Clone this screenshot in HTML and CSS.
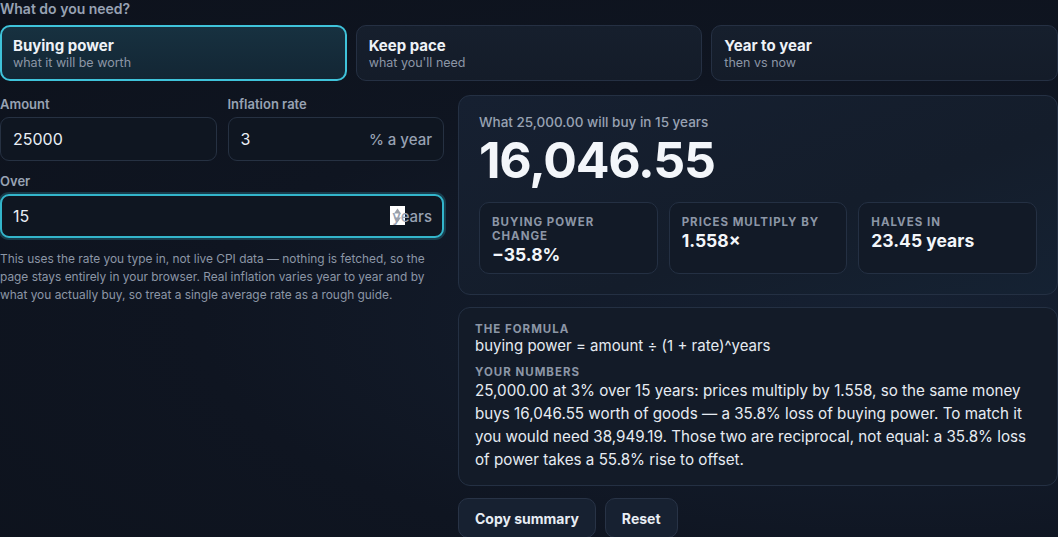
FILE: index.html
```html
<!DOCTYPE html>
<html lang="en">
<head>
<meta charset="utf-8">
<title>Inflation calculator</title>
<link rel="stylesheet" href="styles.css">
</head>
<body>
<main class="app">
  <div class="section-label">What do you need?</div>
  <div class="modes">
    <button class="mode active"><span class="mode-title">Buying power</span><span class="mode-sub">what it will be worth</span></button>
    <button class="mode"><span class="mode-title">Keep pace</span><span class="mode-sub">what you'll need</span></button>
    <button class="mode"><span class="mode-title">Year to year</span><span class="mode-sub">then vs now</span></button>
  </div>

  <div class="main">
    <div class="inputs">
      <div class="row2">
        <div class="field">
          <label class="label">Amount</label>
          <div class="box"><span class="val">25000</span></div>
        </div>
        <div class="field">
          <label class="label">Inflation rate</label>
          <div class="box"><span class="val">3</span><span class="suffix">% a year</span></div>
        </div>
      </div>
      <div class="field">
        <label class="label">Over</label>
        <div class="box focus"><span class="val">15</span><span class="suffix">years</span>
          <span class="spin"><svg width="15" height="19" viewBox="0 0 15 19"><path d="M7.5 2.5 L11 7.5 H4 Z" fill="#9a9fa8"/><path d="M7.5 16.5 L11 11.5 H4 Z" fill="#9a9fa8"/></svg></span>
        </div>
      </div>
      <p class="note">This uses the rate you type in, not live CPI data — nothing is fetched, so the page stays entirely in your browser. Real inflation varies year to year and by what you actually buy, so treat a single average rate as a rough guide.</p>
    </div>

    <div class="results">
      <section class="panel result">
        <div class="result-cap">What 25,000.00 will buy in 15 years</div>
        <div class="big">16,046.55</div>
        <div class="stats">
          <div class="stat"><div class="stat-label">Buying power change</div><div class="stat-val">−35.8%</div></div>
          <div class="stat"><div class="stat-label">Prices multiply by</div><div class="stat-val">1.558×</div></div>
          <div class="stat"><div class="stat-label">Halves in</div><div class="stat-val">23.45 years</div></div>
        </div>
      </section>
      <section class="panel formula">
        <div class="f-label">The formula</div>
        <div class="f-text">buying power = amount ÷ (1 + rate)^years</div>
        <div class="f-label second">Your numbers</div>
        <p class="f-para">25,000.00 at 3% over 15 years: prices multiply by 1.558, so the same money buys 16,046.55 worth of goods — a 35.8% loss of buying power. To match it you would need 38,949.19. Those two are reciprocal, not equal: a 35.8% loss of power takes a 55.8% rise to offset.</p>
      </section>
      <div class="actions">
        <button class="btn">Copy summary</button>
        <button class="btn">Reset</button>
      </div>
    </div>
  </div>
</main>
</body>
</html>
```

FILE: styles.css
```css
* { box-sizing: border-box; }
html, body { margin: 0; padding: 0; }
body {
  font-family: Inter, "Noto Sans", sans-serif;
  color: #e8edf4;
  background: radial-gradient(ellipse at 85% 60%, #162133 0%, #0f1521 55%, #0d121c 100%);
  min-height: 537px;
  overflow: hidden;
}
.app { width: 1058px; }
.section-label {
  font-size: 14px;
  line-height: 18px;
  font-weight: 600;
  color: #98a2b3;
}
.modes {
  margin-top: 7px;
  display: grid;
  grid-template-columns: 1fr 1fr 1fr;
  gap: 9px;
}
.mode {
  font-family: inherit;
  text-align: left;
  height: 56px;
  padding: 10px 12px 0;
  border-radius: 10px;
  border: 1px solid #253043;
  background: linear-gradient(180deg, #161f2d, #141c29);
  display: flex;
  flex-direction: column;
  justify-content: flex-start;
  cursor: pointer;
}
.mode.active {
  border: 2px solid #3fc3da;
  padding: 9px 11px 0;
  background: linear-gradient(180deg, #173140 0%, #132634 100%);
}
.mode-title {
  font-size: 15px;
  line-height: 19px;
  font-weight: 650;
  color: #eef2f7;
}
.mode-sub {
  font-size: 12.5px;
  line-height: 16px;
  color: #8c96a6;
}
.main {
  margin-top: 14px;
  display: grid;
  grid-template-columns: 444px 1fr;
  gap: 14px;
}
.inputs { display: flex; flex-direction: column; padding-top: 1px; }
.row2 { display: grid; grid-template-columns: 1fr 1fr; gap: 11px; }
.field { display: flex; flex-direction: column; margin-bottom: 12px; }
.label {
  font-size: 13px;
  line-height: 16px;
  font-weight: 600;
  color: #98a2b3;
  margin-bottom: 5px;
}
.box {
  position: relative;
  height: 44px;
  border-radius: 9px;
  border: 1px solid #263142;
  background: #0f1621;
  display: flex;
  align-items: center;
  justify-content: space-between;
  padding: 0 11px 0 12px;
}
.box.focus {
  border: 2px solid #33b5cb;
  padding: 0 10px 0 11px;
  box-shadow: 0 0 0 2px rgba(51, 181, 203, 0.25);
}
.val { font-size: 16px; color: #e9eef5; }
.suffix { position: relative; z-index: 1; font-size: 15px; font-weight: 500; color: #98a2b3; }
.spin {
  position: absolute;
  left: 388px;
  top: 10px;
  width: 15px;
  height: 19px;
  background: #ffffff;
  display: block;
}
.spin svg { display: block; }
.note {
  margin: 0;
  font-size: 11.9px;
  line-height: 18px;
  color: #8c96a6;
}
.results { display: flex; flex-direction: column; gap: 12px; }
.panel {
  border-radius: 12px;
  border: 1px solid #243043;
  background: linear-gradient(160deg, #162031 0%, #141d2b 60%, #152233 100%);
}
.result { padding: 18px 20px 20px 20px; }
.result-cap { font-size: 13.5px; line-height: 17px; font-weight: 500; color: #98a2b3; }
.big {
  font-size: 50px;
  line-height: 56px;
  font-weight: 700;
  letter-spacing: -1.2px;
  color: #f3f6fa;
  margin-top: 1px;
}
.stats {
  margin-top: 14px;
  display: grid;
  grid-template-columns: 1fr 1fr 1fr;
  gap: 11px;
}
.stat {
  height: 72px;
  border-radius: 10px;
  border: 1px solid #243043;
  background: #121a27;
  padding: 12px 12px 0;
}
.stat-label {
  font-size: 11.5px;
  line-height: 14px;
  font-weight: 700;
  letter-spacing: 1px;
  text-transform: uppercase;
  color: #8c96a6;
}
.stat-val {
  font-size: 17.5px;
  line-height: 22px;
  font-weight: 700;
  color: #f3f6fa;
  margin-top: 1px;
}
.formula { padding: 14px 17px 14px 16px; background: #131b28; }
.f-label {
  font-size: 11.5px;
  line-height: 14px;
  font-weight: 700;
  letter-spacing: 1px;
  text-transform: uppercase;
  color: #8c96a6;
}
.f-label.second { margin-top: 10px; }
.f-text { font-size: 15px; line-height: 19px; color: #e6ebf2; }
.f-para { margin: 0; font-size: 15.2px; line-height: 23px; color: #e6ebf2; }
.actions { display: flex; gap: 9px; }
.btn {
  font-family: inherit;
  font-size: 14px;
  font-weight: 700;
  color: #e8edf4;
  height: 40px;
  padding: 0 16px;
  border-radius: 10px;
  border: 1px solid #283346;
  background: #172131;
  cursor: pointer;
}
```
